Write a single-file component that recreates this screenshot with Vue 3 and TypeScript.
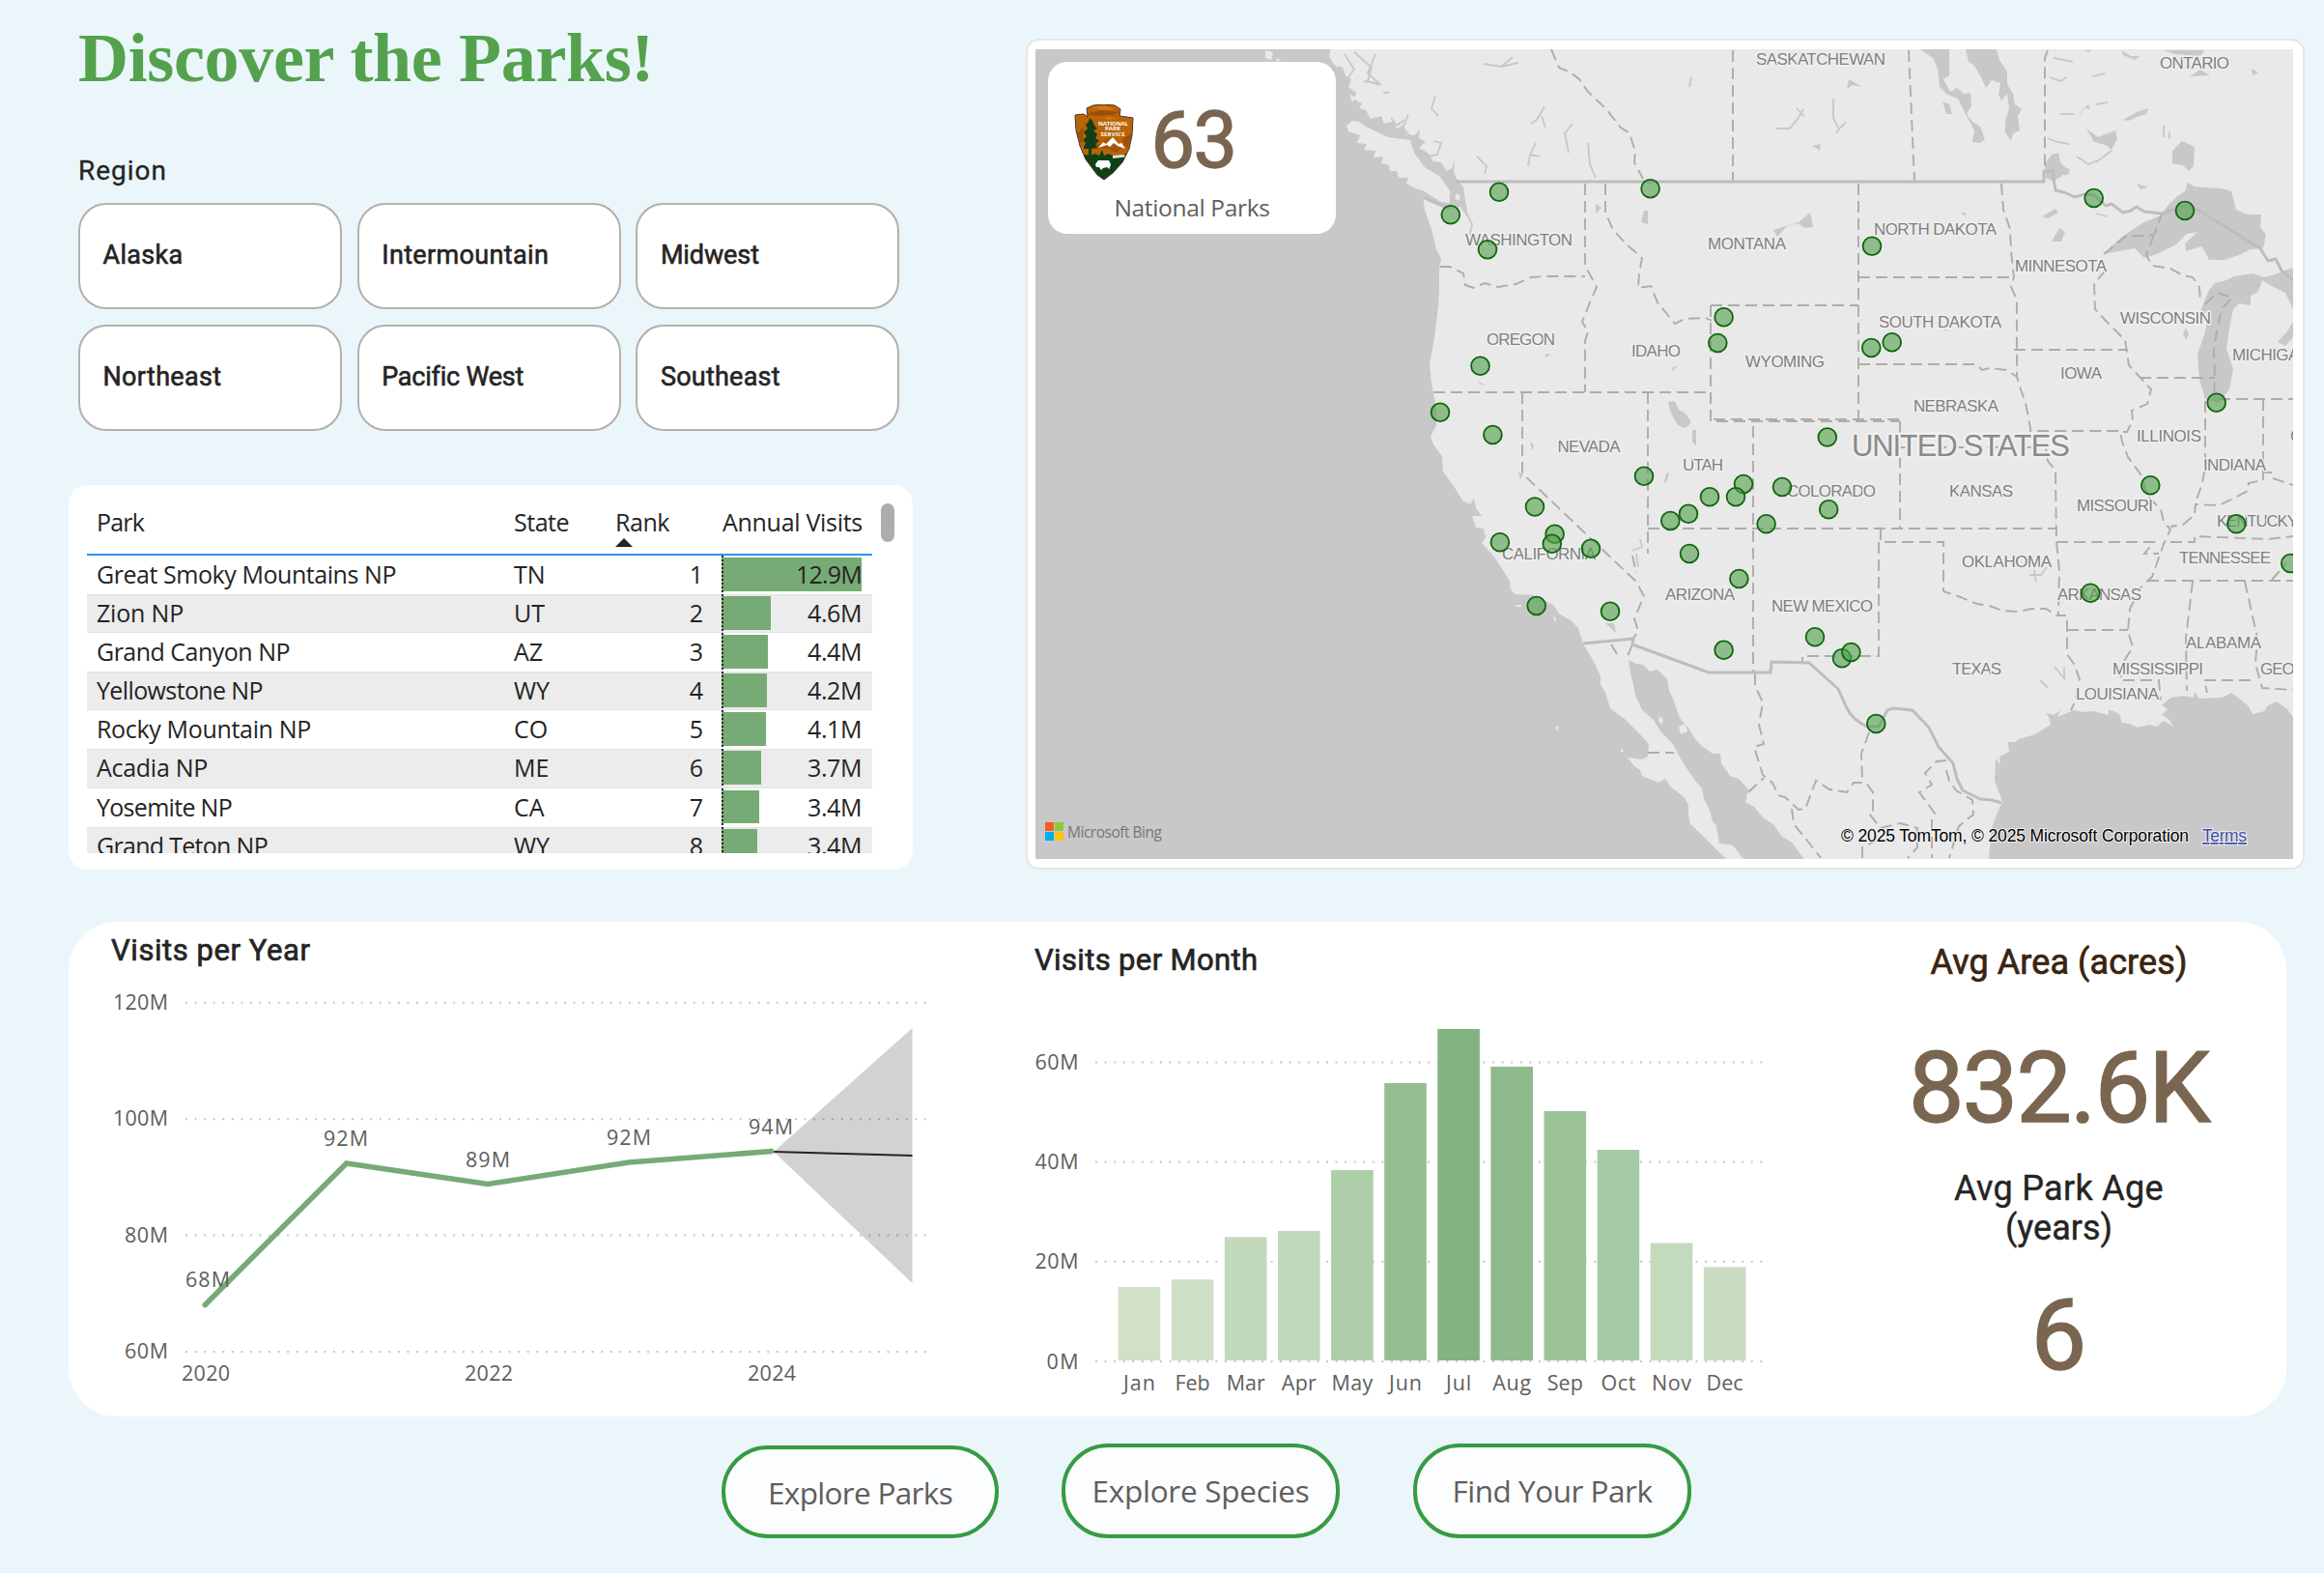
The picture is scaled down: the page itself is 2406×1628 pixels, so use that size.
<script setup lang="ts">
import type { Directive } from 'vue'

// Spreads or tightens the tracking of a label so that it takes the given width.
const vFit: Directive<HTMLElement, number> = {
  mounted(el, { value }) {
    const count = (el.textContent ?? '').length
    const natural = el.getBoundingClientRect().width
    if (count > 1) el.style.letterSpacing = `${(value - natural) / count}px`
  },
}

const regions: [string, number][] = [
  ['Alaska', 83], ['Intermountain', 173], ['Midwest', 102],
  ['Northeast', 123], ['Pacific West', 146], ['Southeast', 124],
]

interface Row { park: string; w: number; state: string; rank: number; visits: string; bar: number }
const rows: Row[] = [
  { park: 'Great Smoky Mountains NP', w: 310, state: 'TN', rank: 1, visits: '12.9M', bar: 145 },
  { park: 'Zion NP', w: 90, state: 'UT', rank: 2, visits: '4.6M', bar: 51 },
  { park: 'Grand Canyon NP', w: 200, state: 'AZ', rank: 3, visits: '4.4M', bar: 48 },
  { park: 'Yellowstone NP', w: 172, state: 'WY', rank: 4, visits: '4.2M', bar: 47 },
  { park: 'Rocky Mountain NP', w: 222, state: 'CO', rank: 5, visits: '4.1M', bar: 45.5 },
  { park: 'Acadia NP', w: 115, state: 'ME', rank: 6, visits: '3.7M', bar: 41 },
  { park: 'Yosemite NP', w: 140, state: 'CA', rank: 7, visits: '3.4M', bar: 38.5 },
  { park: 'Grand Teton NP', w: 177, state: 'WY', rank: 8, visits: '3.4M', bar: 37 },
]

// Map geometry
const land =
  'M1377 51L1376 58L1381 67L1390 70L1393 78L1399 82L1396 90L1404 96L1402 103L1410 107L1407 112L1414 114L1419 123L1430 120L1433 128L1442 126L1446 133L1452 131L1456 139L1464 140L1470 134L1469 143L1476 147L1469 153L1478 158L1484 167L1492 168L1498 177L1503 174L1506 165L1505 178L1508 185L1514 193L1515 203L1518 212L1519 220L1515 219L1512 214L1498 216L1484 210L1473.5 205L1475 217L1482 237L1487 258L1492 268L1490 277L1490 300L1489 317L1485 350L1480 377L1482 397L1487 423L1487 440L1481 452L1484 460L1493 472L1494 488L1505 503L1514 518L1522 522L1526 516L1528 526L1534 534L1524 534L1528 546L1536 547L1538 556L1534 562L1546 575L1558 593L1563 602L1564 610L1568 615L1587 616L1608 626L1614 635L1626 642L1634 650L1639 667L1645 676L1651 687L1657 700L1657 708L1662 717L1667 733L1683 745L1698 760L1707 770L1706 783L1700 786L1685 784L1692 793L1698 797L1700 803L1717 810L1724 806L1730 815L1737 820L1744 826L1748 833L1748 843L1750 853L1766 868L1787 889L1805 889L1794 875L1780 873L1777 855L1773 850L1770 838L1764 827L1762 816L1755 808L1748 798L1741 787L1732 770L1726 764L1719 757L1712 745L1700 735L1693 720L1691 708L1688 697L1686 683L1694 687L1701 688L1708 695L1716 693L1726 703L1728 715L1732 723L1739 743L1747 752L1755 765L1763 773L1773 780L1781 780L1782 790L1791 803L1800 806L1810 817L1807 830L1816 835L1826 847L1836 853L1844 865L1855 872L1868 889L2059 889L2062 857L2067 843L2073 830L2065 808L2066 785L2071 792L2070 783L2080 778L2079 768L2086 768L2090 765L2107 760L2123 750L2121 742L2118 738L2126 740L2133 735L2130 742L2147 735L2158 737L2167 736L2183 740L2183 734L2194 739L2197 748L2205 749L2213 753L2225 750L2233 752L2240 746L2250 752L2246 745L2238 740L2244 734L2238 730L2247 722L2260 720L2271 722L2272 716L2277 723L2300 722L2310 717L2317 722L2327 730L2332 739L2344 736L2348 730L2357 726L2367 733L2374 742L2374 51Z'
const islands = [
  'M1394 130L1400 125L1407 126L1416 132L1437 142L1460 145L1464 158L1475 173L1491 183L1497 192L1501 197L1501 210L1492 209L1482 203L1473 197L1465 195L1456 190L1458 184L1448 184L1446 177L1439 177L1438 171L1430 169L1432 162L1422 163L1424 156L1412 155L1415 149L1405 148L1408 140L1396 136Z',
  'M1310 52l8 2l-2 8l-6 -2z M1321 60l5 2l-4 2z M1380 60l7 6l-3 4z M1397 97l6 4l-3 5z',
  'M1569 626h6v2h-6z M1608 636l4 6l-3 1z M1610 752l4 0l-2 5z M1678 775l3 2l-3 2z M1738 752l7 -3l2 8l-7 3z M1718 741l4 4l-2 5l-3 -4z M1508 200l4 3l-2 5l-4 -3z',
]
const lakes = [
  'M2178 263L2190 251L2200 243L2210 236L2220 230L2237 223L2244 213L2254 203L2262 198L2265 189L2272 193L2283 194L2300 195L2310 198L2315 217L2326 222L2341 222L2340 235L2346 243L2343 257L2330 258L2320 263L2303 269L2287 269L2280 255L2263 260L2262 252L2275 240L2264 242L2253 253L2233 263L2220 267L2210 257L2193 260Z',
  'M2278 322L2287 300L2293 293L2305 290L2313 286L2333 283L2344 287L2352 285L2374 277L2374 320L2366 303L2352 296L2342 290L2338 302L2330 306L2330 316L2318 314L2312 320L2308 340L2305 360L2312 383L2308 403L2297 417L2283 413L2277 393L2275 367L2283 343L2287 320L2276 330Z',
  'M2374 333L2368 343L2358 354L2366 358L2374 349Z',
  'M2035 51L2067 51L2070 62L2078 74L2078 87L2084 97L2086 108L2093 113L2089 120L2091 135L2084 138L2082 146L2076 137L2076 125L2080 112L2078 97L2072 104L2069 98L2071 86L2062 83L2056 91L2050 78L2044 68L2038 64Z',
  'M1988 51L2018 51L2018 78L2012 82L2019 95L2026 91L2033 97L2040 96L2041 110L2036 118L2042 126L2050 131L2055 144L2050 148L2042 147L2044 135L2035 118L2027 102L2016 98L2008 90L2006 71L2001 60Z',
  'M2011 105l7 3l3 10l-6 0z',
  'M2249 156L2259 146L2272 152L2271 172L2266 177L2260 171L2249 169Z',
  'M2117 170L2124 160L2131 158L2133 168L2140 175L2134 183L2125 187L2118 184Z M2131 172l12 3l-2 6l-10 0z M2160 133L2172 142L2190 135L2192 144L2186 155L2180 150L2168 147Z',
  'M1727 416L1734 415L1738 424L1745 428L1751 437L1745 443L1737 440L1730 428Z',
  'M1752 445l4 0l0 16l-4 -4z M1725 490l3 0l-3 10l-2 -1z M1572 489l5 2l-3 5z M1662 645l9 0l2 10z M1584 457l4 4l-2 6z',
  'M1842 236L1862 230L1874 220L1877 235L1868 236L1862 231L1850 234L1840 245L1836 238Z',
  'M1702 218l4 0l0 14l-7 -2z M1652 211l6 4l-6 6z M1529 393l8 6l-4 -1z M1600 366l6 1l-6 3z M1732 380l6 -2l-7 6z',
  'M2114 224l14 -8l3 4l-11 6z M2124 250l8 -14l6 4l-4 10z M2260 345l3 -6l3 7l-3 6z M2152 122l6 -12l-3 8z M2158 112l4 -4l2 5z M2198 124l14 -8l12 -4l-2 6l-10 3l-8 4z M2030 220l5 0l0 4z M2010 340l13 4l-10 -2z M2212 190l12 4l-8 2z',
  'M2158 52l8 0l-4 2z M2196 52l10 6l10 0l-6 4l-12 -5z M2240 52l42 0l-4 6l-26 -2z M2266 80l12 -8l10 6l-18 1z M2331 71l7 4l-6 3z M1912 92l2 -10l14 8l-10 -2z M1876 151l9 -2l-1 7z',
]
const creeks =
  'M1392 56l10 16l-8 10 M1402 54l18 16l-4 14l12 4 M1424 56l-8 20l14 12 M1432 96l6 0 M1412 84l14 2 M1536 66l18 3l12 -10 M1554 69l18 -4 M1486 100l-4 12l7 8 M1599 110l-8 14l-6 4 M1596 120l4 12 M1628 128l-8 10l4 20 M1590 148l-6 12l-2 12 M1584 160l10 2 M1644 148l2 22l6 14 M1529 162l10 10l-2 8 M1751 80l-2 10 M1898 102l0 20l6 12l-3 4 M1903 134l8 -7 M1839 133l14 0l8 -10l6 -10 M1860 112l8 9 M2126 60l20 4 M2122 80l12 4l5 -4 M2166 79l14 -3 M2240 130l0 12 M2246 136l0 8 M2170 108l12 -2 M2133 118l14 0 M2120 143l10 4l12 2 M2150 162l12 8l10 -4 M2170 168l16 -12 M1518 220l6 12l-2 10l4 4 M1514 193l4 30 M1694 573l2 14 M1690 570l10 -4l-2 -8 M1451 130l8 10 M1458 118l-6 16 M1484 146l8 2l-4 12l-10 2 M1440 122l6 8l8 -6 M2101 595l12 0l6 -8 M2106 590l2 12 M2127 690l10 12l0 -12 M2112 704l8 8 M2170 221l12 3'

const borders =
  'M1606 51L1614 70L1626 75L1635 82L1644 95L1662 112L1678 132L1687 138L1693 157L1692 168L1701 185 M1794 52V188 M1976 52L1982 187 M2120 52L2117 60V177 ' +
  'M1641 190V275L1653 297L1646 313L1638 333L1644 343L1641 353V406 M1491 276L1501 276L1515 283L1517 295L1525 298L1537 293L1551 297L1569 294L1585 287L1601 286H1641 ' +
  'M1662 190V220L1670 238L1684 253L1700 267L1697 283L1696 298L1709 296L1716 313L1734 335L1744 330L1766 329L1772 332 M1771 316H1924 M1771 316V436H1967 M1774 434H1967 M1924 190V436 ' +
  'M1924 287H2086 M1924 377H2046L2052 383L2060 381L2077 383L2088 390L2092 403L2097 417L2102 443V446H2195 M2072 190L2074 217L2081 237L2082 260L2085 287L2082 297L2088 310V390 M2085 362H2203 ' +
  'M2178 263L2200 245L2230 243L2238 221 M2180 280L2168 293L2169 320L2183 335L2200 352L2204 378L2215 390L2227 403L2223 418L2207 425L2208 435L2202 447L2195 447L2197 457L2203 473L2217 492L2223 513L2237 527L2240 540L2247 548L2240 563L2235 577L2228 597L2217 607L2205 630L2203 653L2208 670L2197 687L2195 704H2235L2237 725 ' +
  'M2230 243L2222 264L2228 275L2247 278L2260 285L2270 287L2277 297L2278 313 M2283 315L2295 303L2305 306L2311 308L2300 320L2295 343L2292 363L2293 391L2292 413 M2215 391H2293 M2283 415V483L2280 500L2273 520 M2297 413H2374 M2343 413V487L2343 497L2328 500L2327 508L2310 517L2297 523L2273 522L2272 533L2260 543L2247 545 M2343 489H2352 M2353 495L2374 502 ' +
  'M1484 406H1771 M1576 406V490L1694 602L1702 617L1692 640L1696 653L1690 662 M1706 406V573 M1690 575L1694 593 M1706 547H2128 M1815 441V696 M1967 436V547 M1967 463H2118L2120 477L2128 487L2129 561 ' +
  'M1947 547V561H2012V612L2027 617L2047 625L2060 627L2073 632L2090 633L2103 630H2118L2130 637 M1945 561V679H1866V686 M2129 561L2132 590L2131 637H2140V677L2147 687L2153 703L2148 727L2144 735 M2129 561H2230L2220 573H2235 M2140 652H2203 ' +
  'M2247 561H2272V555L2348 558L2374 555 M2223 601H2374 M2270 602L2263 660L2264 715 M2324 602L2337 660L2335 687L2342 712L2374 714 M2330 704H2282L2285 717 M2352 600L2367 583 ' +
  'M1817 697V710L1825 727L1821 750L1826 770L1816 773L1825 802L1835 810L1841 823L1848 825L1862 838L1869 837L1880 808L1894 817L1912 820L1919 810L1932 810L1939 820V840L1935 842L1947 857L1967 852L1985 857V877L1975 888 M1810 820L1826 805 M1935 758L1927 780L1928 807 M1855 837L1857 853L1871 870L1885 888 ' +
  'M2015 787L2005 788L1993 800L2000 812L1987 820L2007 847 M2015 797L2018 808L2025 818L2042 828L2043 843L2028 855L2018 888 M2000 848V888 M1706 779H1733 M1928 888V877L1942 870 M1668 667l6 10 M1690 667l-5 12'
const frontier =
  'M1508 188H2116V177H2125L2128 197L2137 199L2148 204L2158 201L2168 202L2180 213L2186 211L2198 220L2206 218L2212 214L2220 219L2238 221L2262 213L2275 217L2340 257L2348 270L2356 268L2362 280L2374 290 M1475 205L1498 215 M1639 666L1691 661L1690 667L1769 696H1833L1834 685L1873 686L1903 713L1912 733Q1918 745 1933 752L1945 752L1954 735L1960 733L1980 735L1997 753L2007 773L2022 790L2026 806L2032 818L2050 827L2062 828L2072 831'

const places: [string, number, number, number][] = [
  ['SASKATCHEWAN', 1818, 67, 134], ['ONTARIO', 2236, 71, 72], ['WASHINGTON', 1517, 254, 111], ['MONTANA', 1768, 258, 81],
  ['OREGON', 1539, 357, 71], ['IDAHO', 1689, 369, 51], ['WYOMING', 1807, 380, 82], ['NORTH DAKOTA', 1940, 243, 127],
  ['SOUTH DAKOTA', 1945, 338.5, 127], ['MINNESOTA', 2086, 281, 95], ['WISCONSIN', 2195, 334.5, 94], ['MICHIGAN', 2311, 373, 81],
  ['IOWA', 2133, 392, 43], ['NEBRASKA', 1981, 426, 88], ['ILLINOIS', 2212, 457, 67], ['INDIANA', 2281, 487, 65], ['OHIO', 2371, 457, 40],
  ['KANSAS', 2018, 514, 66], ['COLORADO', 1850, 514, 92], ['MISSOURI', 2150, 529, 79], ['KENTUCKY', 2295, 545, 84],
  ['TENNESSEE', 2256, 583, 95], ['OKLAHOMA', 2031, 587, 93], ['ARKANSAS', 2130, 621, 87], ['ALABAMA', 2263, 671, 78],
  ['MISSISSIPPI', 2187, 697.5, 94], ['GEORGIA', 2340, 697.5, 73], ['LOUISIANA', 2149, 724, 86], ['TEXAS', 2021, 697.5, 51],
  ['NEW MEXICO', 1834, 633, 105], ['ARIZONA', 1724, 621, 72], ['CALIFORNIA', 1555, 579, 97], ['NEVADA', 1612.5, 468, 65], ['UTAH', 1742, 487, 42],
]

const pins: [number, number][] = [
  [1552, 198.7], [1501.8, 222.3], [1540, 258.3], [1708.6, 195.3], [1784.6, 328.3], [1778.3, 355], [1532.5, 378.7], [1491, 426.7],
  [1545.4, 450], [1891.8, 452.5], [2167.7, 205], [2262, 218], [1938, 254.7], [1937.3, 360], [1958.7, 354.3], [2294.7, 416.7],
  [1702, 492.7], [1589, 524.5], [1805, 501], [1797, 514.3], [1770, 514.3], [1748, 531.7], [1729.3, 539], [1845, 504],
  [1893.2, 527.3], [1828.6, 542.3], [1609.6, 552.7], [1606.8, 562.7], [1552.9, 561.3], [1647, 567.7], [1749, 573], [1800.4, 599],
  [1590.7, 627], [1667, 632.7], [1879, 659.3], [1907, 681.3], [1916.4, 675], [1784.6, 672.7], [2226.3, 502.3], [2315.3, 542.3],
  [2371.3, 583], [2164.3, 613.7], [1942.3, 749],
]

// Charts
const yearTicks: [string, number, number][] = [['120M', 1037.8, 57], ['100M', 1158.2, 57], ['80M', 1278.6, 45], ['60M', 1399, 45]]
const yearPoints: [string, number, number][] = [
  ['68M', 215, 1331.5], ['92M', 358, 1185.5], ['89M', 505, 1207.5], ['92M', 651, 1184.5], ['94M', 798, 1173.5],
]
const years: [string, number][] = [['2020', 213], ['2022', 506], ['2024', 799]]
const monthTicks: [string, number, number][] = [['60M', 1099.4, 45], ['40M', 1202.6, 45], ['20M', 1305.8, 45], ['0M', 1409, 33]]
const months: [string, number, string, number][] = [
  ['Jan', 1332, '#d0e1c7', 33], ['Feb', 1324.3, '#cee0c5', 36], ['Mar', 1280.3, '#c2d9bb', 40], ['Apr', 1274, '#c1d9ba', 36],
  ['May', 1211, '#aecda9', 43], ['Jun', 1121, '#94bf91', 34], ['Jul', 1065, '#83b381', 26], ['Aug', 1104, '#8fba8b', 40],
  ['Sep', 1150, '#9bc397', 37], ['Oct', 1190, '#a6caa3', 36], ['Nov', 1286.5, '#c3dabc', 41], ['Dec', 1311.3, '#c9dcc1', 38],
]
</script>

<template>
  <main class="page">
    <section class="top">
      <div class="left">
        <h1><span v-fit="596">Discover the Parks!</span></h1>
        <h2 class="slicer-title"><span v-fit="92">Region</span></h2>
        <div class="slicer">
          <button v-for="[name, w] in regions" :key="name"><span v-fit="w">{{ name }}</span></button>
        </div>
        <div class="table-card">
          <div class="table">
            <div class="row head">
              <span class="park"><span v-fit="49">Park</span></span>
              <span class="state"><span v-fit="57">State</span></span>
              <span class="rank-head"><span v-fit="56">Rank</span>
                <svg width="18" height="9" viewBox="0 0 18 9"><path d="M9 0L18 9H0Z" fill="#252423" /></svg>
              </span>
              <span class="visits-head"><span v-fit="145">Annual Visits</span></span>
            </div>
            <div class="body">
              <div v-for="r in rows" :key="r.rank" class="row">
                <span class="park"><span v-fit="r.w">{{ r.park }}</span></span>
                <span class="state">{{ r.state }}</span>
                <span class="rank">{{ r.rank }}</span>
                <span class="visits">
                  <i class="bar" :style="{ width: r.bar + 'px' }"></i>
                  <b v-fit="r.rank === 1 ? 68 : 56">{{ r.visits }}</b>
                </span>
              </div>
            </div>
          </div>
          <div class="thumb"></div>
        </div>
      </div>

      <div class="map-card">
        <svg class="map" viewBox="1072 51 1302 838" width="1302" height="838">
          <rect x="1072" y="51" width="1302" height="838" fill="#c8c8c8" />
          <g fill="#e9e9e9">
            <path :d="land" />
            <path v-for="(d, i) in islands" :key="i" :d="d" />
          </g>
          <g fill="#c8c8c8"><path v-for="(d, i) in lakes" :key="i" :d="d" /></g>
          <path :d="creeks" class="creek" />
          <path :d="borders" class="border" />
          <path :d="frontier" class="frontier" />
          <g class="place">
            <text v-for="[t, x, y, w] in places" :key="t" :x="x" :y="y" :textLength="w">{{ t }}</text>
            <text class="country" x="1917" y="472" textLength="226">UNITED STATES</text>
          </g>
          <circle v-for="([x, y], i) in pins" :key="i" class="pin" :cx="x" :cy="y" r="9.4" />
          <g>
            <rect x="1082" y="851" width="9" height="9" fill="#f1611f" />
            <rect x="1092" y="851" width="9" height="9" fill="#8cc83c" />
            <rect x="1082" y="861" width="9" height="9" fill="#00adef" />
            <rect x="1092" y="861" width="9" height="9" fill="#ffc20e" />
            <text class="bing" x="1105" y="866.5" textLength="98">Microsoft Bing</text>
          </g>
          <text class="legal" x="1906" y="871" textLength="360">© 2025 TomTom, © 2025 Microsoft Corporation</text>
          <text class="legal terms" x="2280" y="871" textLength="46">Terms</text>
        </svg>
        <div class="count-card">
          <div class="count-row">
            <svg width="62" height="79" viewBox="0 0 62 79">
              <defs><clipPath id="arrowhead"><path d="M1 11L10 10L14 13L13 4L20 1L30 0L42 1L48 5L47 12L61 14L60 32L57 46L50 60L40 71L31 78L24 73L12 57L6 43L2 27Z" /></clipPath></defs>
              <g clip-path="url(#arrowhead)">
                <rect width="62" height="79" fill="#b96407" />
                <path d="M12 10L28 6L47 8L40 11L24 12Z M3 30L10 24L8 42Z M50 36L60 30L55 46Z M36 46L50 44L44 50Z" fill="#99500a" />
                <path d="M18 3L32 2L44 5L30 6Z M28 13L44 14L36 16Z" fill="#d37a18" />
                <path d="M8 45L12 44L20 36L25 42L32 36L40 34L50 46H28L22 46Z" fill="#a3560a" />
                <path d="M25 45L30 39L33 41L40 34L46 41L49 40L53 46L45 43L41 40L37 44L34 42Z M7 45L13 44L12 46Z" fill="#fff" />
                <path d="M5 54L12 52L16 53L22 51L26 53L29 47L31 53L36 51L40 53L60 51V79H5Z" fill="#0f4016" />
                <path d="M40 53L50 52L58 54L40 56Z" fill="#dfe4dd" />
                <path d="M16 14L19 17L21 22L24 25L20 27L24 31L22 35L26 38L22 41L24 45L18 46V55H15V46L9 46L12 40L9 37L13 33L10 29L14 25L12 21L15 18Z" fill="#113f17" />
                <path d="M22 62L25 58L31 58L36 58L38 62L36.500 67L34 65L30 66L28 68L26 65L23 65Z" fill="#fff" />
              </g>
              <path d="M1 11L10 10L14 13L13 4L20 1L30 0L42 1L48 5L47 12L61 14L60 32L57 46L50 60L40 71L31 78L24 73L12 57L6 43L2 27Z" fill="none" stroke="#4b3423" stroke-width="1" />
              <g class="nps">
                <text x="25" y="21.500" textLength="31">NATIONAL</text>
                <text x="32" y="27.200" textLength="16">PARK</text>
                <text x="27.500" y="33" textLength="25">SERVICE</text>
              </g>
            </svg>
            <span class="count">63</span>
          </div>
          <div class="count-label"><span v-fit="161">National Parks</span></div>
        </div>
      </div>
    </section>

    <section class="stats">
      <svg class="chart" viewBox="71 954 945 511" width="945" height="511">
        <text class="chart-title" x="115" y="994" textLength="206">Visits per Year</text>
        <g v-for="[t, y, w] in yearTicks" :key="t">
          <line class="grid" x1="192" x2="959" :y1="y" :y2="y" />
          <text class="tick" text-anchor="end" x="174" :y="y + 7" :textLength="w">{{ t }}</text>
        </g>
        <path d="M801 1192L944.5 1064V1328Z" fill="#000" fill-opacity="0.175" />
        <path d="M801 1192L944.5 1196" stroke="#252423" stroke-width="2" />
        <path d="M212.3 1350.5L358.7 1204L504.9 1225.5L651 1203L798.8 1191.5" class="trend" />
        <text v-for="([t, x, y], i) in yearPoints" :key="i" class="tick" text-anchor="middle" :x="x" :y="y" textLength="46">{{ t }}</text>
        <text v-for="[t, x] in years" :key="t" class="tick" text-anchor="middle" :x="x" y="1428.5" textLength="50">{{ t }}</text>
      </svg>

      <svg class="chart" viewBox="1016 954 860 511" width="860" height="511">
        <text class="chart-title" x="1071" y="1004" textLength="231">Visits per Month</text>
        <g v-for="[t, y, w] in monthTicks" :key="t">
          <line class="grid" x1="1134" x2="1827" :y1="y" :y2="y" />
          <text class="tick" text-anchor="end" x="1116.5" :y="y + 7.5" :textLength="w">{{ t }}</text>
        </g>
        <g v-for="([m, top, fill, w], i) in months" :key="m">
          <rect :x="1157.7 + i * 55.1" :y="top" width="43.6" :height="1408 - top" :fill="fill" />
          <text class="tick" text-anchor="middle" :x="1179.5 + i * 55.1" y="1439" :textLength="w">{{ m }}</text>
        </g>
      </svg>

      <div class="kpis">
        <div class="kpi-label brown"><span v-fit="266">Avg Area (acres)</span></div>
        <div class="kpi-value"><span v-fit="311">832.6K</span></div>
        <div class="kpi-label second"><span v-fit="217">Avg Park Age</span><br /><span v-fit="111">(years)</span></div>
        <div class="kpi-value last">6</div>
      </div>
    </section>

    <nav>
      <button class="a"><span v-fit="191">Explore Parks</span></button>
      <button class="b"><span v-fit="225">Explore Species</span></button>
      <button class="c"><span v-fit="207">Find Your Park</span></button>
    </nav>
  </main>
</template>

<style>
body { background: #ebf6fb; }
</style>

<style scoped>
.page { width: 2406px; height: 1628px; overflow: hidden; background: #ebf6fb; color: #252423; font-family: "Open Sans", sans-serif; }
.page * { box-sizing: border-box; }
button { font: inherit; color: inherit; margin: 0; }
span, b { white-space: nowrap; }
.top { display: flex; height: 954px; padding-left: 71px; }
.left { width: 874px; padding-top: 20px; }
h1 { margin: 0 0 0 10px; height: 80px; font: bold 72px/80px "Liberation Serif", serif; color: #54a24e; }
.slicer-title { margin: 59.5px 0 0 10px; height: 34px; font: 400 28px/34px Roboto, sans-serif; -webkit-text-stroke: 0.3px #252423; }
.slicer { display: grid; grid-template-columns: repeat(3, 273px); grid-auto-rows: 110px; gap: 16px 15.7px; margin: 16.5px 0 0 10px; }
.slicer button { border: 2px solid #b3b0ad; border-radius: 29px; background: #fff; text-align: left; padding: 0 0 2px 23.5px; font: 400 27px/32px Roboto, sans-serif; -webkit-text-stroke: 0.6px #252423; }
.table-card { margin-top: 56px; height: 398px; border-radius: 20px; background: #fff; display: flex; justify-content: space-between; padding: 19px 19px 0 19px; }
.table { width: 813px; height: 362px; overflow: hidden; }
.row { display: flex; height: 40.1px; line-height: 40px; font-size: 25px; padding-left: 10px; }
.row.head { height: 54px; line-height: 38px; border-bottom: 2px solid #2b92f5; }
.body .row { line-height: 39px; }
.park { width: 432px; }
.state { width: 105px; }
.rank-head { width: 111px; display: flex; flex-direction: column; align-items: flex-start; }
.rank-head svg { margin-top: -2px; flex: none; }
.rank { width: 91px; text-align: right; }
.visits { position: relative; margin-left: 19px; width: 145px; height: 40px; display: flex; justify-content: flex-end; }
.visits::before { content: ""; position: absolute; z-index: 1; left: 0; top: 0; width: 1.5px; height: 40px; background: repeating-linear-gradient(#252423 0 2px, transparent 2px 4px); }
.visits b { font-weight: 400; position: relative; }
.bar { position: absolute; left: 0; top: 2px; height: 34.5px; background: #77ab75; }
.body .row:nth-child(even) { background: #ececec; box-shadow: inset 0 1.5px #e3e3e3, inset 0 -1px #e3e3e3; }
.thumb { width: 14px; height: 40px; border-radius: 7px; background: #adadad; }
.map-card { position: relative; margin: 40px 0 0 116.5px; width: 1324px; height: 860px; border: 2px solid #e6e6e6; border-radius: 14px; background: #fff; padding: 9px 0 0 8.5px; }
.map { display: block; }
.creek { fill: none; stroke: #c8c8c8; stroke-width: 1.8; }
.border { fill: none; stroke: #b0aca8; stroke-width: 1.9; stroke-dasharray: 12 6; }
.frontier { fill: none; stroke: #c0bcbc; stroke-width: 3; stroke-linejoin: round; }
.place text { font: 17px "Liberation Sans", sans-serif; fill: #808080; stroke: #efefef; stroke-width: 3px; paint-order: stroke; stroke-linejoin: round; }
.place .country { font-size: 31px; fill: #8a8a8a; stroke-width: 5px; }
.pin { fill: #54a24e; fill-opacity: 0.62; stroke: #0f640f; stroke-width: 1.8; }
.bing { font: 500 15.5px "Open Sans", sans-serif; fill: #767676; }
.legal { font: 17.5px "Liberation Sans", sans-serif; fill: #000; stroke: #f0f0f0; stroke-width: 2px; paint-order: stroke; }
.terms { fill: #3b4ea3; text-decoration: underline; }
.count-card { position: absolute; left: 21.5px; top: 22px; width: 298px; height: 178px; border-radius: 20px; background: #fff; padding-top: 41px; }
.count-row { display: flex; align-items: center; height: 84px; padding-left: 26.5px; }
.count { margin-left: 18px; font: 400 81px/82px Roboto, sans-serif; padding-bottom: 2px; letter-spacing: -1.5px; color: #7a6650; -webkit-text-stroke: 1.4px #7a6650; }
.count-label { margin-top: 10.5px; font-size: 24.5px; line-height: 30px; text-align: center; color: #605e5c; }
.nps text { font: bold 6px "Open Sans", sans-serif; fill: #fff; }
.stats { margin-left: 71px; width: 2296px; height: 511.5px; border-radius: 50px; background: #fff; display: flex; }
.chart { display: block; flex: none; }
.chart-title { font: 400 31px Roboto, sans-serif; fill: #252423; stroke: #252423; stroke-width: 0.7px; }
.tick { font: 21.5px "Open Sans", sans-serif; fill: #605e5c; }
.grid { stroke: #c8c6c4; stroke-width: 2; stroke-dasharray: 2 7.56; }
.trend { fill: none; stroke: #77ab75; stroke-width: 5.6; stroke-linecap: round; stroke-linejoin: miter; }
.kpis { width: 491px; padding-left: 20px; text-align: center; font-family: Roboto, sans-serif; }
.kpi-label { margin-top: 22px; font-size: 36px; line-height: 41.5px; -webkit-text-stroke: 0.7px currentColor; }
.brown { color: #3a2410; }
.kpi-value { margin-top: 53px; font-size: 102px; line-height: 110px; color: #7a6650; -webkit-text-stroke: 1.6px #7a6650; }
.second { margin-top: 29px; -webkit-text-stroke-width: 0.4px; }
.last { margin-top: 34px; }
nav { display: flex; align-items: flex-end; margin-top: 28px; padding-left: 747px; height: 98px; }
nav button { border: 4px solid #369c41; border-radius: 48px; background: #fcfdff; height: 98px; width: 288px; padding: 0; font-size: 31.5px; line-height: 40px; color: #605e5c; }
nav .a { height: 96px; width: 287px; padding-top: 2px; }
nav .b { margin-left: 65px; }
nav .c { margin-left: 76px; }
</style>
